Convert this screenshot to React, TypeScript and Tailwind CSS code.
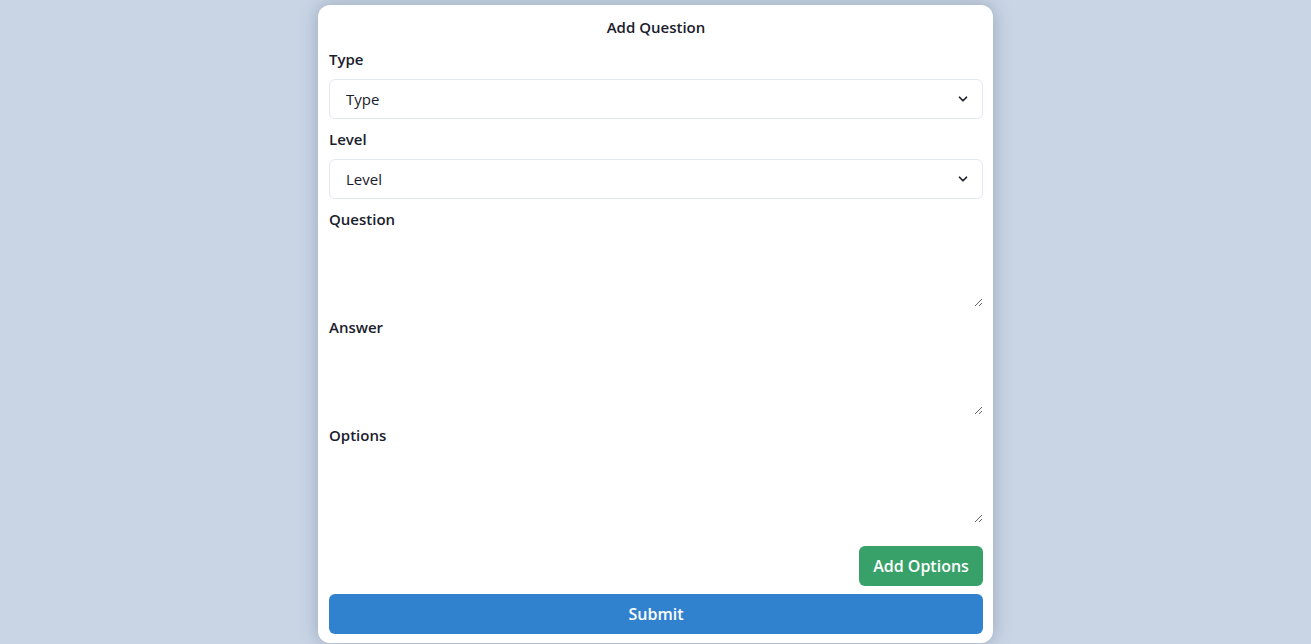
import { ChevronDown } from "lucide-react";

function SelectField({ label, placeholder }: { label: string; placeholder: string }) {
	return (
		<div className="flex flex-col gap-2">
			<label className="text-[15px] font-semibold leading-6">{label}</label>
			<div className="relative">
				<select
					defaultValue=""
					className="h-10 w-full appearance-none rounded-md border border-[#e2e8f0] bg-white pl-4 pr-10 text-[15px] text-[#1a202c] outline-none"
				>
					<option value="" disabled>
						{placeholder}
					</option>
				</select>
				<ChevronDown
					size={14}
					strokeWidth={3}
					className="pointer-events-none absolute right-[13px] top-1/2 -translate-y-1/2 text-[#1a202c]"
				/>
			</div>
		</div>
	);
}

function TextField({ label }: { label: string }) {
	return (
		<div className="flex flex-col gap-2">
			<label className="text-[15px] font-semibold leading-6">{label}</label>
			<textarea className="h-[68px] w-full border-0 bg-white px-4 text-[15px] outline-none" />
		</div>
	);
}

export default function App() {
	return (
		<div
			className="min-h-screen bg-[#c9d5e5] text-[#1a202c]"
			style={{ fontFamily: '"Open Sans", "Noto Sans", sans-serif' }}
		>
			<div className="mx-auto flex h-[644px] w-[675px] flex-col pt-[5px] pb-px">
				<div className="flex flex-1 flex-col gap-2 rounded-xl bg-white pl-[11px] pr-[10px] pt-[10px] pb-[9px] shadow-[0_0_18px_rgba(60,80,110,0.35)]">
					<h2 className="text-center text-[15px] font-semibold leading-6">Add Question</h2>
					<SelectField label="Type" placeholder="Type" />
					<SelectField label="Level" placeholder="Level" />
					<TextField label="Question" />
					<TextField label="Answer" />
					<TextField label="Options" />
					<div className="mt-[15px] flex justify-end">
						<button className="h-10 w-[124px] rounded-md bg-[#38a169] text-base font-semibold text-white">
							Add Options
						</button>
					</div>
					<button className="h-10 w-full rounded-md bg-[#3182ce] text-base font-semibold text-white">
						Submit
					</button>
				</div>
			</div>
		</div>
	);
}
